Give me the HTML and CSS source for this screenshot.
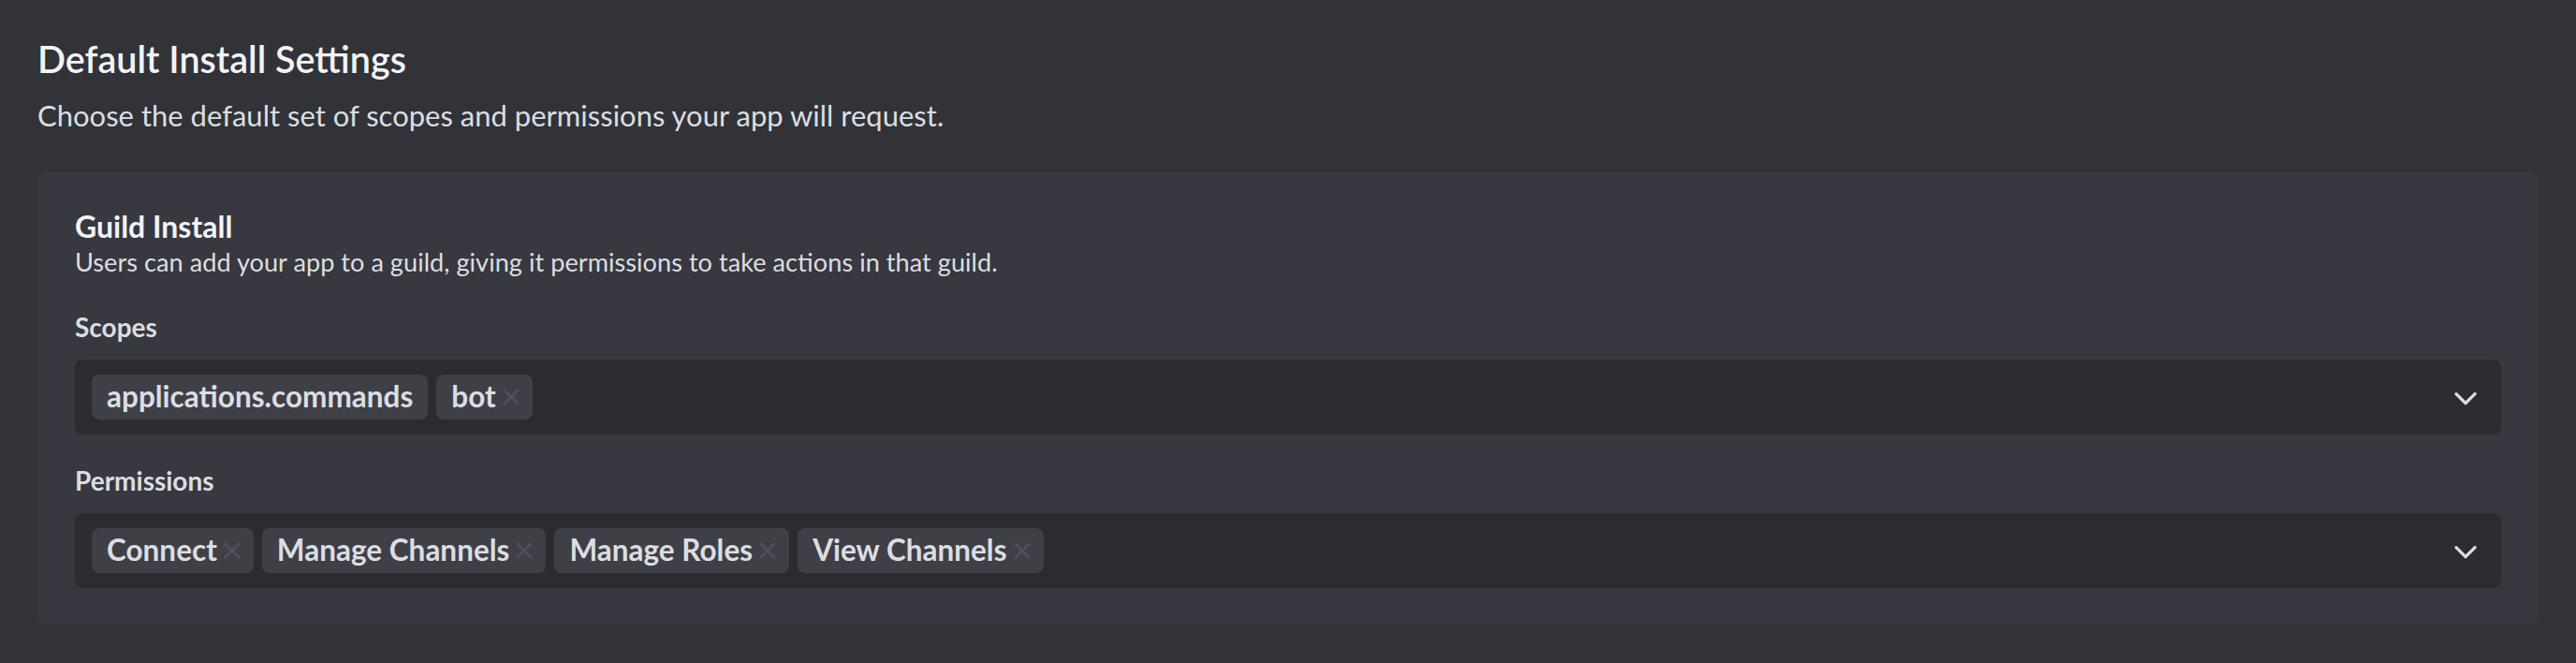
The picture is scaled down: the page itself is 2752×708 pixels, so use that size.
FILE: index.html
```html
<!DOCTYPE html>
<html lang="en">
<head>
<meta charset="utf-8">
<title>Default Install Settings</title>
<link rel="stylesheet" href="styles.css">
</head>
<body>
<main class="page">
  <h2 class="title">Default Install Settings</h2>
  <p class="subtitle">Choose the default set of scopes and permissions your app will request.</p>

  <section class="card">
    <h3 class="card-title">Guild Install</h3>
    <p class="card-desc">Users can add your app to a guild, giving it permissions to take actions in that guild.</p>

    <div class="field">
      <label class="field-label">Scopes</label>
      <div class="select">
        <div class="tags">
          <span class="tag">applications.commands</span>
          <span class="tag removable">bot<svg class="tag-x" viewBox="0 0 20 20"><path d="M2 2L18 18M18 2L2 18"/></svg></span>
        </div>
        <svg class="chevron" viewBox="0 0 24 24"><path d="M5.3 9.3a1 1 0 0 1 1.4 0l5.3 5.29 5.3-5.3a1 1 0 1 1 1.4 1.42l-6 6a1 1 0 0 1-1.4 0l-6-6a1 1 0 0 1 0-1.42Z"/></svg>
      </div>
    </div>

    <div class="field">
      <label class="field-label">Permissions</label>
      <div class="select">
        <div class="tags">
          <span class="tag removable">Connect<svg class="tag-x" viewBox="0 0 20 20"><path d="M2 2L18 18M18 2L2 18"/></svg></span>
          <span class="tag removable">Manage Channels<svg class="tag-x" viewBox="0 0 20 20"><path d="M2 2L18 18M18 2L2 18"/></svg></span>
          <span class="tag removable">Manage Roles<svg class="tag-x" viewBox="0 0 20 20"><path d="M2 2L18 18M18 2L2 18"/></svg></span>
          <span class="tag removable">View Channels<svg class="tag-x" viewBox="0 0 20 20"><path d="M2 2L18 18M18 2L2 18"/></svg></span>
        </div>
        <svg class="chevron" viewBox="0 0 24 24"><path d="M5.3 9.3a1 1 0 0 1 1.4 0l5.3 5.29 5.3-5.3a1 1 0 1 1 1.4 1.42l-6 6a1 1 0 0 1-1.4 0l-6-6a1 1 0 0 1 0-1.42Z"/></svg>
      </div>
    </div>
  </section>
</main>
</body>
</html>
```

FILE: styles.css
```css
* { box-sizing: border-box; }

html, body {
  margin: 0;
  padding: 0;
  background: #313338;
  height: 100%;
}

body {
  font-family: Lato, "Noto Sans", "Liberation Sans", sans-serif;
  color: #dbdee1;
}

.page {
  padding: 39px 40px 0 40px;
}

.title {
  margin: 0;
  font-size: 39.5px;
  line-height: 48px;
  font-weight: 600;
  color: #f2f3f5;
}

.subtitle {
  margin: 16px 0 0 0;
  font-size: 31px;
  line-height: 40px;
  font-weight: 400;
  color: #dbdee1;
}

.card {
  margin-top: 41px;
  background: #373840;
  border-radius: 8px;
  padding: 40px 40px 39px 40px;
}

.card-title {
  margin: 0;
  font-size: 32px;
  line-height: 36px;
  font-weight: 700;
  color: #f2f3f5;
}

.card-desc {
  margin: 2px 0 0 0;
  font-size: 27.2px;
  line-height: 36px;
  font-weight: 400;
  color: #dbdee1;
}

.field {
  display: flex;
  flex-direction: column;
  margin-top: 33px;
}

.field + .field {
  margin-top: 31px;
}

.field-label {
  font-size: 28px;
  line-height: 36px;
  font-weight: 700;
  color: #dbdee1;
  margin-bottom: 17px;
}

.select {
  height: 80px;
  background: #2b2c31;
  border-radius: 8px;
  padding: 16px 18px 16px 18px;
  display: flex;
  align-items: center;
  justify-content: space-between;
}

.tags {
  display: flex;
  gap: 9px;
}

.tag {
  height: 48px;
  display: inline-flex;
  align-items: center;
  padding: 0 16px 2px 16px;
  background: #3f4047;
  border-radius: 8px;
  font-size: 31.5px;
  line-height: 46px;
  font-weight: 700;
  color: #dbdee1;
}

.tag.removable {
  padding-right: 13px;
}

.tag-x {
  width: 20px;
  height: 20px;
  margin-left: 6px;
  margin-top: 2px;
  fill: none;
  stroke: #4f515a;
  stroke-width: 2.6;
}

.chevron {
  width: 40px;
  height: 40px;
  fill: #dbdee1;
}
```
